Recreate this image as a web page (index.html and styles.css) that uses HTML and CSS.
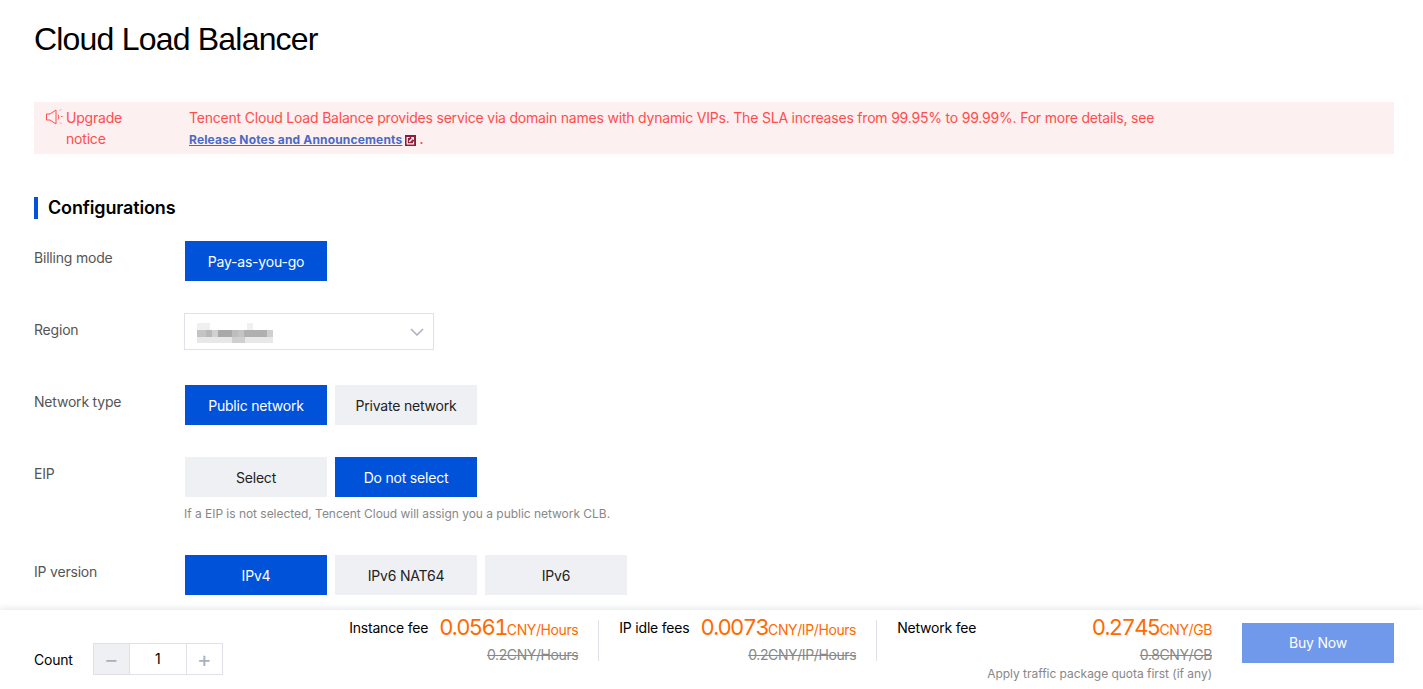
FILE: index.html
```html
<!DOCTYPE html>
<html lang="en">
<head>
    <meta charset="UTF-8">
    <meta name="viewport" content="width=device-width, initial-scale=1.0">
    <title>Cloud Load Balancer</title>
    <link rel="stylesheet" href="styles.css">
</head>
<body>

    <main class="content">
        <h1>Cloud Load Balancer</h1>

        <div class="notice">
            <div class="notice-title">
                <svg class="notice-icon" width="18" height="16" viewBox="0 0 18 16" fill="none" stroke="#ff4d4d" stroke-width="1">
                    <path d="M0.500 5h3.500L10 1v14L4 11H0.500z"/>
                    <path d="M12 5.500c1 1.500 1 3.500 0 5"/>
                    <path d="M14 1.500l1-1M15 7.500h1.500M14 13.500l1 1"/>
                </svg>
                <span>Upgrade notice</span>
            </div>
            <div class="notice-body">
                <p>Tencent Cloud Load Balance provides service via domain names with dynamic VIPs. The SLA increases from 99.95% to 99.99%. For more details, see</p>
                <p class="notice-link-row">
                    <a href="#">Release Notes and Announcements</a>
                    <svg class="ext-icon" width="11" height="11" viewBox="0 0 11 11">
                        <rect width="11" height="11" fill="#8f1d3a"/>
                        <path d="M4.500 2.500H2.200v6.300h6.300V6.500" fill="none" stroke="#fff" stroke-width="1.200"/>
                        <path d="M4.200 6.800L7.500 3.500" fill="none" stroke="#fff" stroke-width="1.500"/>
                        <path d="M5.800 2h3.200v3.200z" fill="#fff"/>
                    </svg>
                    <span>.</span>
                </p>
            </div>
        </div>

        <h2>Configurations</h2>

        <div class="row">
            <label>Billing mode</label>
            <div class="options">
                <button class="opt active">Pay-as-you-go</button>
            </div>
        </div>

        <div class="row">
            <label>Region</label>
            <div class="select">
                <svg class="blurred" width="76" height="20" viewBox="0 0 76 20">
                    <rect x="0" y="0" width="13" height="7" fill="#f0f0f0"/>
                    <rect x="50" y="0" width="6" height="7" fill="#f0f0f0"/>
                    <rect x="0" y="7" width="9" height="7" fill="#c4c4c4"/>
                    <rect x="9" y="7" width="6" height="7" fill="#b8b8b8"/>
                    <rect x="15" y="7" width="6" height="7" fill="#d0d0d0"/>
                    <rect x="21" y="7" width="14" height="7" fill="#a9a9a9"/>
                    <rect x="35" y="7" width="6" height="7" fill="#bdbdbd"/>
                    <rect x="41" y="7" width="6" height="7" fill="#c4c4c4"/>
                    <rect x="47" y="7" width="23" height="7" fill="#b0b0b0"/>
                    <rect x="70" y="7" width="6" height="7" fill="#cfcfcf"/>
                    <rect x="0" y="14" width="35" height="6" fill="#e8e8e8"/>
                    <rect x="35" y="14" width="13" height="6" fill="#cfcfcf"/>
                    <rect x="48" y="14" width="28" height="6" fill="#e8e8e8"/>
                </svg>
                <svg class="chevron" width="14" height="8" viewBox="0 0 14 8" fill="none" stroke="#a9b0c2" stroke-width="1.500">
                    <path d="M1 1l6 6 6-6"/>
                </svg>
            </div>
        </div>

        <div class="row">
            <label>Network type</label>
            <div class="options">
                <button class="opt active">Public network</button>
                <button class="opt">Private network</button>
            </div>
        </div>

        <div class="row row-hint">
            <label>EIP</label>
            <div>
                <div class="options">
                    <button class="opt">Select</button>
                    <button class="opt active">Do not select</button>
                </div>
                <p class="hint">If a EIP is not selected, Tencent Cloud will assign you a public network CLB.</p>
            </div>
        </div>

        <div class="row">
            <label>IP version</label>
            <div class="options">
                <button class="opt active">IPv4</button>
                <button class="opt">IPv6 NAT64</button>
                <button class="opt">IPv6</button>
            </div>
        </div>
    </main>

    <footer class="buybar">
        <div class="count">
            <span>Count</span>
            <div class="stepper">
                <button class="step step-minus">&minus;</button>
                <span class="step-value">1</span>
                <button class="step">+</button>
            </div>
        </div>

        <div class="fees">
            <div class="fee">
                <span class="fee-label">Instance fee</span>
                <div class="fee-prices">
                    <div class="price"><b>0.0561</b>CNY/Hours</div>
                    <div class="old-price">0.2CNY/Hours</div>
                </div>
            </div>
            <div class="fee">
                <span class="fee-label">IP idle fees</span>
                <div class="fee-prices">
                    <div class="price"><b>0.0073</b>CNY/IP/Hours</div>
                    <div class="old-price">0.2CNY/IP/Hours</div>
                </div>
            </div>
            <div class="fee">
                <span class="fee-label">Network fee</span>
                <div class="fee-prices">
                    <div class="price"><b>0.2745</b>CNY/GB</div>
                    <div class="old-price">0.8CNY/GB</div>
                    <div class="fee-note">Apply traffic package quota first (if any)</div>
                </div>
            </div>
        </div>

        <button class="buy">Buy Now</button>
    </footer>

</body>
</html>
```

FILE: styles.css
```css
* {
    box-sizing: border-box;
}
html, body {
    height: 100%;
}
body {
    margin: 0;
    display: flex;
    flex-direction: column;
    overflow: hidden;
    font-family: Inter, "Noto Sans", sans-serif;
    font-size: 14px;
    letter-spacing: -0.2px;
    color: #000;
    background: #fff;
}
p {
    margin: 0;
}
button {
    font-family: inherit;
    letter-spacing: inherit;
}

.content {
    flex: 1;
    min-height: 0;
    overflow: hidden;
    padding: 18px 29px 0 34px;
}
h1 {
    margin: 0;
    font-family: "Liberation Sans", Arial, sans-serif;
    font-size: 32px;
    font-weight: 400;
    letter-spacing: -0.8px;
    line-height: 42px;
}

/* Notice */
.notice {
    display: flex;
    margin-top: 42px;
    height: 52px;
    padding: 5px 0 0 12px;
    background: #fdf0f0;
    color: #ff4d4d;
    line-height: 22px;
}
.notice-title {
    display: flex;
    width: 143px;
    flex-shrink: 0;
    line-height: 21px;
}
.notice-icon {
    margin: 2px 2px 0 0;
    flex-shrink: 0;
}
.notice-title span {
    width: 70px;
}
.notice-link-row {
    display: flex;
    align-items: center;
    font-size: 12px;
    font-weight: 700;
    letter-spacing: 0.16px;
}
.notice-link-row a {
    color: #4a6ac4;
}
.ext-icon {
    margin: 0 3px;
}

/* Form */
h2 {
    margin: 43px 0 22px;
    padding-left: 10px;
    border-left: 4px solid #0052d9;
    font-size: 18px;
    font-weight: 600;
    letter-spacing: -0.15px;
    line-height: 22px;
}
.row {
    display: flex;
    height: 72px;
}
.row-hint {
    height: 98px;
}
.row label {
    width: 151px;
    flex-shrink: 0;
    padding-top: 8px;
    color: #555;
    line-height: 18px;
}
.options {
    display: flex;
    gap: 8px;
}
.opt {
    width: 142px;
    height: 40px;
    padding: 0;
    border: 0;
    background: #eff0f4;
    color: #222;
    font-size: 14px;
}
.opt.active {
    background: #0052d9;
    color: #fff;
}
.hint {
    margin: 9px 0 0 -1px;
    color: #888;
    font-size: 12px;
    letter-spacing: -0.03px;
    line-height: 16px;
}
.select {
    display: flex;
    align-items: center;
    justify-content: space-between;
    width: 250px;
    height: 37px;
    margin-left: -1px;
    padding: 0 9px 0 12px;
    border: 1px solid #dfe0e8;
}
.blurred {
    margin-top: 3px;
    filter: blur(0.6px);
}

/* Bottom bar */
.buybar {
    position: relative;
    display: flex;
    flex-shrink: 0;
    height: 79px;
    padding: 0 29px 0 34px;
    background: #fff;
    box-shadow: 0 -2px 6px rgba(30, 40, 80, 0.1);
}
.count {
    display: flex;
    align-items: center;
    gap: 20px;
    height: 32px;
    margin-top: 33px;
}
.stepper {
    display: flex;
    width: 130px;
    height: 32px;
    border: 1px solid #dfe0e8;
}
.step {
    width: 35px;
    padding: 0;
    border: 0;
    background: #fff;
    color: #a9b0c2;
    font-size: 22px;
    line-height: 1;
}
.step-minus {
    background: #eef0f4;
}
.step-value {
    flex: 1;
    border: solid #dfe0e8;
    border-width: 0 1px;
    text-align: center;
    line-height: 30px;
}
.fees {
    display: flex;
    margin-left: auto;
    padding-top: 10px;
}
.fee {
    display: flex;
    gap: 11px;
    height: 41px;
    padding: 0 20px;
    border-left: 1px solid #dfe0e8;
}
.fee:first-child {
    border-left: 0;
}
.fee:last-child {
    padding-right: 30px;
}
.fee-label {
    font-size: 14px;
    line-height: 16px;
    white-space: nowrap;
}
.fee-prices {
    margin-top: -3px;
    text-align: right;
    white-space: nowrap;
}
.price {
    height: 24px;
    color: #ff6a00;
    font-size: 14px;
    letter-spacing: -0.4px;
    line-height: 20px;
}
.price b {
    font-size: 22px;
    font-weight: 400;
    font-variant-numeric: tabular-nums;
    letter-spacing: -1.6px;
}
.old-price {
    margin-top: 5px;
    color: #888;
    font-size: 14px;
    letter-spacing: -0.4px;
    line-height: 18px;
    text-decoration: line-through;
}
.fee-note {
    margin-top: 2px;
    color: #888;
    font-size: 12px;
    letter-spacing: -0.03px;
    line-height: 16px;
}
.buy {
    align-self: flex-start;
    width: 152px;
    height: 40px;
    margin-top: 13px;
    padding: 0 0 2px;
    border: 0;
    background: #7199eb;
    color: #fff;
    font-size: 14px;
}
```
